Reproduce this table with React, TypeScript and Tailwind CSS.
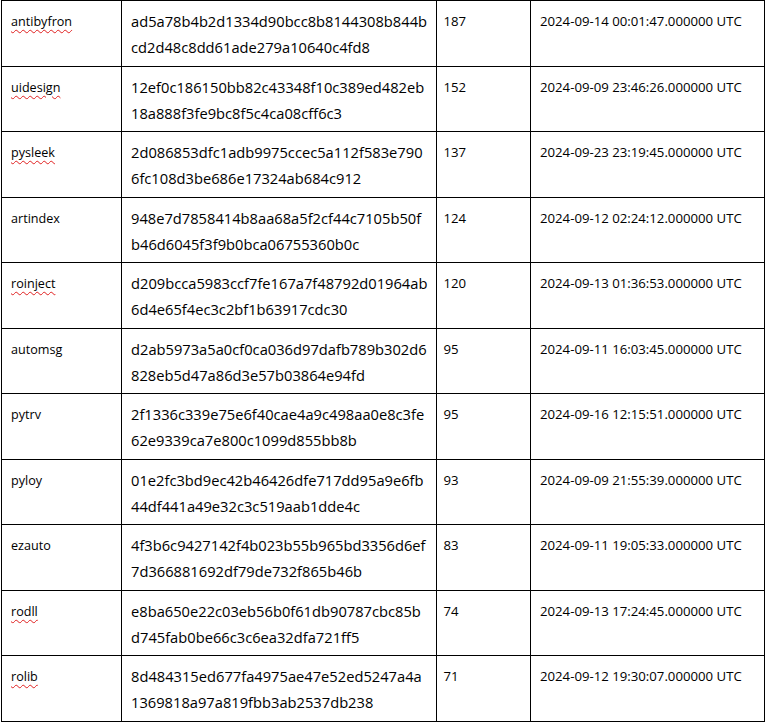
const rows = [
  { name: 'antibyfron', flag: true, hash: ['ad5a78b4b2d1334d90bcc8b8144308b844b', 'cd2d48c8dd61ade279a10640c4fd8'], count: 187, date: '2024-09-14 00:01:47.000000 UTC' },
  { name: 'uidesign', flag: true, hash: ['12ef0c186150bb82c43348f10c389ed482eb', '18a888f3fe9bc8f5c4ca08cff6c3'], count: 152, date: '2024-09-09 23:46:26.000000 UTC' },
  { name: 'pysleek', flag: true, hash: ['2d086853dfc1adb9975ccec5a112f583e790', '6fc108d3be686e17324ab684c912'], count: 137, date: '2024-09-23 23:19:45.000000 UTC' },
  { name: 'artindex', flag: false, hash: ['948e7d7858414b8aa68a5f2cf44c7105b50f', 'b46d6045f3f9b0bca06755360b0c'], count: 124, date: '2024-09-12 02:24:12.000000 UTC' },
  { name: 'roinject', flag: true, hash: ['d209bcca5983ccf7fe167a7f48792d01964ab', '6d4e65f4ec3c2bf1b63917cdc30'], count: 120, date: '2024-09-13 01:36:53.000000 UTC' },
  { name: 'automsg', flag: false, hash: ['d2ab5973a5a0cf0ca036d97dafb789b302d6', '828eb5d47a86d3e57b03864e94fd'], count: 95, date: '2024-09-11 16:03:45.000000 UTC' },
  { name: 'pytrv', flag: false, hash: ['2f1336c339e75e6f40cae4a9c498aa0e8c3fe', '62e9339ca7e800c1099d855bb8b'], count: 95, date: '2024-09-16 12:15:51.000000 UTC' },
  { name: 'pyloy', flag: false, hash: ['01e2fc3bd9ec42b46426dfe717dd95a9e6fb', '44df441a49e32c3c519aab1dde4c'], count: 93, date: '2024-09-09 21:55:39.000000 UTC' },
  { name: 'ezauto', flag: false, hash: ['4f3b6c9427142f4b023b55b965bd3356d6ef', '7d366881692df79de732f865b46b'], count: 83, date: '2024-09-11 19:05:33.000000 UTC' },
  { name: 'rodll', flag: true, hash: ['e8ba650e22c03eb56b0f61db90787cbc85b', 'd745fab0be66c3c6ea32dfa721ff5'], count: 74, date: '2024-09-13 17:24:45.000000 UTC' },
  { name: 'rolib', flag: true, hash: ['8d484315ed677fa4975ae47e52ed5247a4a', '1369818a97a819fbb3ab2537db238'], count: 71, date: '2024-09-12 19:30:07.000000 UTC' },
];

// word-style export: hash column set one size up from the rest
export default function App() {
  return (
    <main className="min-h-screen bg-white pl-[1px] font-['Open_Sans',sans-serif] text-[13.2px] leading-[26px] text-black">
      <div className="grid w-max grid-cols-[120px_314.5px_94.5px_233.5px] border-l border-t border-black">
        {rows.map((r) => (
          <div key={r.name} className="contents">
            <div className="h-[65.5px] whitespace-nowrap border-b border-r border-black px-[9px] pt-[8px] text-[12.6px]">
              <span className={r.flag ? 'underline decoration-[#e02020] decoration-wavy decoration-1 underline-offset-[3px]' : ''}>
                {r.name}
              </span>
            </div>
            <div className="h-[65.5px] whitespace-nowrap border-b border-r border-black px-[9px] pt-[7px] text-[14.7px]">
              <div>{r.hash[0]}</div>
              <div>{r.hash[1]}</div>
            </div>
            <div className="h-[65.5px] border-b border-r border-black px-[7px] pt-[7px]">{r.count}</div>
            <div className="h-[65.5px] whitespace-nowrap border-b border-r border-black px-[9px] pt-[7px]">{r.date}</div>
          </div>
        ))}
      </div>
    </main>
  );
}
